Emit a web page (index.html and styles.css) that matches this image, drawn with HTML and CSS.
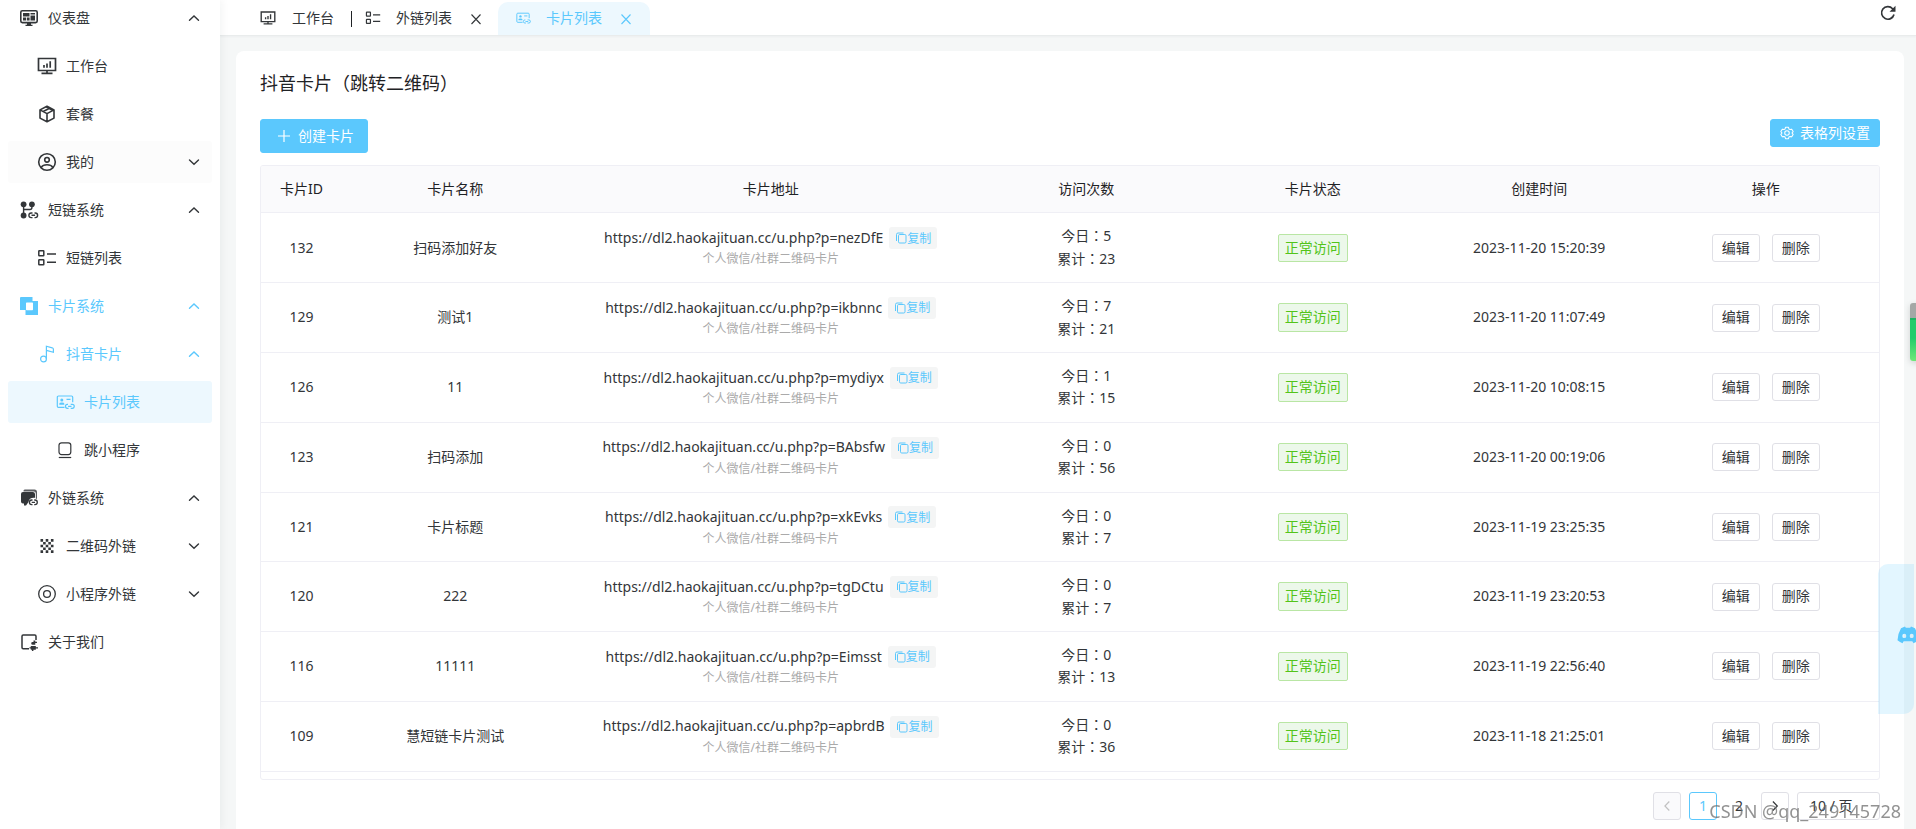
FILE: index.html
```html
<!DOCTYPE html>
<html lang="zh-CN">
<head>
<meta charset="utf-8">
<meta name="viewport" content="width=device-width, initial-scale=1">
<title>卡片列表</title>
<link rel="stylesheet" href="styles.css">
</head>
<body>
<svg class="sprite" aria-hidden="true">
  <symbol id="i-up" viewBox="0 0 16 16"><path d="M3.500 10.300 8 5.900l4.500 4.400" fill="none" stroke="currentColor" stroke-width="1.400" stroke-linecap="round"/></symbol>
  <symbol id="i-down" viewBox="0 0 16 16"><path d="M3.500 5.900 8 10.300l4.500-4.400" fill="none" stroke="currentColor" stroke-width="1.400" stroke-linecap="round"/></symbol>
  <symbol id="i-dash" viewBox="0 0 20 20"><rect x="1.800" y="2.800" width="16.400" height="11.800" rx="1.500" fill="none" stroke="currentColor" stroke-width="1.600"/><path d="M4 5h6.500v3.600H4zM11.500 5H16v1.600h-4.500zM11.500 7.400H16v5.200h-4.500zM4 9.500h3v3.100H4zM7.800 9.500h2.800v3.100H7.800zM8 14.500h4v2.200h1.500V18h-7v-1.300H8z" fill="currentColor"/></symbol>
  <symbol id="i-monitor" viewBox="0 0 20 20"><g fill="none" stroke="currentColor" stroke-width="1.700"><path d="M1.500 2.500h17v12h-17zM4.500 17.300h11M10 14.500v2.800M7 9v2.700M10 7.500v4.200M13.200 5.300v6.400"/></g></symbol>
  <symbol id="i-box" viewBox="0 0 20 20"><path d="M10 2.200 17 5.900v8.200l-7 3.700-7-3.700V5.900zM3 5.900l7 3.700 7-3.700M10 9.600v8.200M9 2.800 16 6.500M6.200 7.500 13 4" fill="none" stroke="currentColor" stroke-width="1.600" stroke-linejoin="round"/></symbol>
  <symbol id="i-user" viewBox="0 0 20 20"><g fill="none" stroke="currentColor" stroke-width="1.600"><circle cx="10" cy="10" r="8.300"/><circle cx="10" cy="7.800" r="2.300"/><path d="M4 15.600c1.300-2 3.500-2.800 6-2.800s4.700.8 6 2.800"/></g></symbol>
  <symbol id="i-flow" viewBox="0 0 20 20"><g fill="currentColor"><circle cx="4.600" cy="4.300" r="2.900"/><circle cx="12.900" cy="4.300" r="2.900"/><circle cx="4.600" cy="15.500" r="2.900"/></g><path d="M4.600 5v9M12.900 5v2.500q0 2-2 2H4.600M13.500 13h-1.300a2.300 2.300 0 0 0 0 4.600h1.300M15.500 13h.8a2.300 2.300 0 0 1 0 4.600h-.8M12.500 15.300h3.600" fill="none" stroke="currentColor" stroke-width="1.400"/></symbol>
  <symbol id="i-list" viewBox="0 0 20 20"><g fill="none" stroke="currentColor" stroke-width="1.500"><rect x="1.800" y="2.700" width="5" height="5" rx=".5"/><rect x="1.800" y="11.700" width="5" height="5" rx=".5"/><path d="M10 6h9M10 14.300h9"/></g></symbol>
  <symbol id="i-cards" viewBox="0 0 20 20"><path d="M2 1h11.500v4H19v14H6.500v-5H1V2q0-1 1-1zM7 7.200v6.400q0 .7.700.7h5.600q.7 0 .7-.7V7.200q0-.7-.7-.7H7.700q-.7 0-.7.700z" fill="currentColor" fill-rule="evenodd"/></symbol>
  <symbol id="i-note" viewBox="0 0 20 20"><g fill="none" stroke="currentColor" stroke-width="1.200"><circle cx="6.500" cy="15" r="2.900"/><path d="M9.400 15V2.200l5.800 1.600q1.200.4 1.200 1.500v3L9.400 6.300"/></g></symbol>
  <symbol id="i-idcard" viewBox="0 0 20 20"><path d="M9.500 15.400H3.500q-1.200 0-1.200-1.200V5.200Q2.300 4 3.500 4h13q1.200 0 1.200 1.200v5M11.500 7.400h4M13 12.400h-.6a1.900 1.900 0 0 0 0 3.900h1.200M15.700 12.400h1.600a1.900 1.900 0 0 1 0 3.900h-1.600M13.100 14.400h3.400" fill="none" stroke="currentColor" stroke-width="1.200"/><circle cx="6.800" cy="8" r="1.500" fill="currentColor"/><path d="M4.300 12.800v-1q0-1.300 2.500-1.300t2.500 1.300v1z" fill="currentColor"/></symbol>
  <symbol id="i-mini" viewBox="0 0 20 20"><g fill="none" stroke="currentColor" stroke-width="1.200"><rect x="4" y="2.800" width="11.800" height="11.800" rx="2.500"/><path d="M3.800 17.500h12.400"/></g></symbol>
  <symbol id="i-chat" viewBox="0 0 20 20"><path d="M4.500 2.500q.4-1 1.500-1h9.500q2.500 0 2.500 2.500v7l-1.200-.5V5.500q0-2-2-2H4.500z" fill="currentColor" opacity=".8"/><path d="M2 6q0-2 2-2h9.800Q16 4 16 6v3.800q-6-.5-6.500 4.200L7 17.500H5v-2H4q-2 0-2-2z" fill="currentColor"/><path d="M13.500 12h-.8a2.300 2.300 0 0 0 0 4.600h.8M15.200 12h.8a2.300 2.300 0 0 1 0 4.600h-.8M12.700 14.300h3.300" fill="none" stroke="currentColor" stroke-width="1.300"/></symbol>
  <symbol id="i-qr" viewBox="0 0 20 20"><path d="M3.500 4.400h13M3.500 10h13M3.500 15.600h13" fill="none" stroke="currentColor" stroke-width="2.600" stroke-dasharray="2.600"/><path d="M6.100 7.200h8.400M6.100 12.800h8.400" fill="none" stroke="currentColor" stroke-width="2.600" stroke-dasharray="2.600"/></symbol>
  <symbol id="i-target" viewBox="0 0 20 20"><g fill="none" stroke="currentColor" stroke-width="1.300"><circle cx="10" cy="10" r="8.300"/><circle cx="10" cy="10" r="3.400"/></g></symbol>
  <symbol id="i-about" viewBox="0 0 20 20"><path d="M10 16.700H4.200q-1.200 0-1.200-1.200V4.200Q3 3 4.200 3h11.600Q17 3 17 4.200V8" fill="none" stroke="currentColor" stroke-width="1.500"/><path d="M14.500 8.500h1.800v1.300H18V11h-1.700v1.800h-2.500q-1.600 0-1.600-1.500 0-1.200 1.500-1.200h.8zM10.500 15.200h1.300V14h5v1.200H19v1.200h-2.200v1.300h-2.400V19h-1.500v-1.300h-1.100v-1.300h-1.300z" fill="currentColor"/></symbol>
  <symbol id="i-close" viewBox="0 0 14 14"><path d="M2.500 2.500l9 9.500M11.500 2.500l-9 9.500" fill="none" stroke="currentColor" stroke-width="1.100"/></symbol>
  <symbol id="i-refresh" viewBox="0 0 16 16"><path d="M14 9.500A6.300 6.300 0 1 1 12.600 3.700L14 5" fill="none" stroke="currentColor" stroke-width="1.700"/><path d="M15.500.8v6h-6z" fill="currentColor"/></symbol>
  <symbol id="i-plus" viewBox="0 0 14 14"><path d="M7 1v12M1 7h12" fill="none" stroke="currentColor" stroke-width="1.200"/></symbol>
  <symbol id="i-gear" viewBox="0 0 16 16"><g fill="none" stroke="currentColor" stroke-width="1.200" stroke-linejoin="round"><path d="M6.300 1.500h3.400l.5 1.900 1.300.7 1.900-.5 1.600 2.800L13.700 8l1.300 1.600-1.600 2.800-1.900-.5-1.300.7-.5 1.900H6.300l-.5-1.900-1.300-.7-1.900.5L1 9.600 2.300 8 1 6.400l1.600-2.800 1.900.5 1.300-.7z"/><circle cx="8" cy="8" r="2.600"/></g></symbol>
  <symbol id="i-copy" viewBox="0 0 12 12"><g fill="none" stroke="currentColor"><rect x="3.500" y="2.500" width="7.500" height="8.500" rx="1.200"/><path d="M1.500 9V2.500Q1.500 1 3 1h5.500"/></g></symbol>
  <symbol id="i-bot" viewBox="0 0 22 18"><path d="M4 2.200 8 .6l.8 1.200h4.400L14 .6l4 1.600q3.500 6 3.500 12-2.500 2.200-5 3l-1.200-2H6.700l-1.200 2q-2.500-.8-5-3 0-6 3.500-12zM7.300 7.700a2 2.200 0 1 0 0 4.400 2 2.200 0 0 0 0-4.400zM14.700 7.700a2 2.200 0 1 0 0 4.400 2 2.200 0 0 0 0-4.400z" fill="currentColor" fill-rule="evenodd"/></symbol>
</svg>

<div class="app">
  <aside class="sidebar">
    <nav class="menu" aria-label="主菜单">
      <a class="item" href="#"><svg class="icon"><use href="#i-dash"/></svg><span>仪表盘</span><svg class="arrow"><use href="#i-up"/></svg></a>
      <a class="item level-2" href="#"><svg class="icon"><use href="#i-monitor"/></svg><span>工作台</span></a>
      <a class="item level-2" href="#"><svg class="icon"><use href="#i-box"/></svg><span>套餐</span></a>
      <a class="item level-2 hovered" href="#"><svg class="icon"><use href="#i-user"/></svg><span>我的</span><svg class="arrow"><use href="#i-down"/></svg></a>
      <a class="item" href="#"><svg class="icon"><use href="#i-flow"/></svg><span>短链系统</span><svg class="arrow"><use href="#i-up"/></svg></a>
      <a class="item level-2" href="#"><svg class="icon"><use href="#i-list"/></svg><span>短链列表</span></a>
      <a class="item active" href="#"><svg class="icon"><use href="#i-cards"/></svg><span>卡片系统</span><svg class="arrow"><use href="#i-up"/></svg></a>
      <a class="item level-2 active" href="#"><svg class="icon"><use href="#i-note"/></svg><span>抖音卡片</span><svg class="arrow"><use href="#i-up"/></svg></a>
      <a class="item level-3 active selected" href="#" aria-current="page"><svg class="icon"><use href="#i-idcard"/></svg><span>卡片列表</span></a>
      <a class="item level-3" href="#"><svg class="icon"><use href="#i-mini"/></svg><span>跳小程序</span></a>
      <a class="item" href="#"><svg class="icon"><use href="#i-chat"/></svg><span>外链系统</span><svg class="arrow"><use href="#i-up"/></svg></a>
      <a class="item level-2" href="#"><svg class="icon"><use href="#i-qr"/></svg><span>二维码外链</span><svg class="arrow"><use href="#i-down"/></svg></a>
      <a class="item level-2" href="#"><svg class="icon"><use href="#i-target"/></svg><span>小程序外链</span><svg class="arrow"><use href="#i-down"/></svg></a>
      <a class="item" href="#"><svg class="icon"><use href="#i-about"/></svg><span>关于我们</span></a>
    </nav>
  </aside>

  <div class="main">
    <header class="tabbar">
      <div class="tab home"><a href="#"><svg class="tab-icon"><use href="#i-monitor"/></svg>工作台</a></div>
      <div class="tab first"><a href="#"><svg class="tab-icon"><use href="#i-list"/></svg>外链列表</a><button class="close" aria-label="关闭外链列表"><svg><use href="#i-close"/></svg></button></div>
      <div class="tab current"><a href="#"><svg class="tab-icon"><use href="#i-idcard"/></svg>卡片列表</a><button class="close" aria-label="关闭卡片列表"><svg><use href="#i-close"/></svg></button></div>
      <button class="refresh" aria-label="刷新"><svg><use href="#i-refresh"/></svg></button>
    </header>

    <main class="card">
      <h1 class="title">抖音卡片<span class="punct" lang="zh-TW">（</span>跳转二维码<span class="punct" lang="zh-TW">）</span></h1>
      <div class="toolbar">
        <button class="btn primary large"><svg><use href="#i-plus"/></svg>创建卡片</button>
        <button class="btn primary"><svg><use href="#i-gear"/></svg>表格列设置</button>
      </div>
      <div class="table-wrap">
        <table class="table">
          <colgroup><col><col class="col-normal"><col class="col-url"><col class="col-normal"><col class="col-normal"><col class="col-normal"><col class="col-normal"></colgroup>
          <thead><tr><th>卡片ID</th><th>卡片名称</th><th>卡片地址</th><th>访问次数</th><th>卡片状态</th><th>创建时间</th><th>操作</th></tr></thead>
          <tbody>
            <tr><td>132</td><td>扫码添加好友</td><td><div class="url">https://dl2.haokajituan.cc/u.php?p=nezDfE<button class="copy"><svg><use href="#i-copy"/></svg>复制</button></div><div class="note">个人微信/社群二维码卡片</div></td><td><div>今日<span class="punct" lang="zh-TW">：</span>5</div><div>累计<span class="punct" lang="zh-TW">：</span>23</div></td><td><span class="status">正常访问</span></td><td>2023-11-20 15:20:39</td><td><div class="actions"><button class="btn">编辑</button><button class="btn">删除</button></div></td></tr>
            <tr><td>129</td><td>测试1</td><td><div class="url">https://dl2.haokajituan.cc/u.php?p=ikbnnc<button class="copy"><svg><use href="#i-copy"/></svg>复制</button></div><div class="note">个人微信/社群二维码卡片</div></td><td><div>今日<span class="punct" lang="zh-TW">：</span>7</div><div>累计<span class="punct" lang="zh-TW">：</span>21</div></td><td><span class="status">正常访问</span></td><td>2023-11-20 11:07:49</td><td><div class="actions"><button class="btn">编辑</button><button class="btn">删除</button></div></td></tr>
            <tr><td>126</td><td>11</td><td><div class="url">https://dl2.haokajituan.cc/u.php?p=mydiyx<button class="copy"><svg><use href="#i-copy"/></svg>复制</button></div><div class="note">个人微信/社群二维码卡片</div></td><td><div>今日<span class="punct" lang="zh-TW">：</span>1</div><div>累计<span class="punct" lang="zh-TW">：</span>15</div></td><td><span class="status">正常访问</span></td><td>2023-11-20 10:08:15</td><td><div class="actions"><button class="btn">编辑</button><button class="btn">删除</button></div></td></tr>
            <tr><td>123</td><td>扫码添加</td><td><div class="url">https://dl2.haokajituan.cc/u.php?p=BAbsfw<button class="copy"><svg><use href="#i-copy"/></svg>复制</button></div><div class="note">个人微信/社群二维码卡片</div></td><td><div>今日<span class="punct" lang="zh-TW">：</span>0</div><div>累计<span class="punct" lang="zh-TW">：</span>56</div></td><td><span class="status">正常访问</span></td><td>2023-11-20 00:19:06</td><td><div class="actions"><button class="btn">编辑</button><button class="btn">删除</button></div></td></tr>
            <tr><td>121</td><td>卡片标题</td><td><div class="url">https://dl2.haokajituan.cc/u.php?p=xkEvks<button class="copy"><svg><use href="#i-copy"/></svg>复制</button></div><div class="note">个人微信/社群二维码卡片</div></td><td><div>今日<span class="punct" lang="zh-TW">：</span>0</div><div>累计<span class="punct" lang="zh-TW">：</span>7</div></td><td><span class="status">正常访问</span></td><td>2023-11-19 23:25:35</td><td><div class="actions"><button class="btn">编辑</button><button class="btn">删除</button></div></td></tr>
            <tr><td>120</td><td>222</td><td><div class="url">https://dl2.haokajituan.cc/u.php?p=tgDCtu<button class="copy"><svg><use href="#i-copy"/></svg>复制</button></div><div class="note">个人微信/社群二维码卡片</div></td><td><div>今日<span class="punct" lang="zh-TW">：</span>0</div><div>累计<span class="punct" lang="zh-TW">：</span>7</div></td><td><span class="status">正常访问</span></td><td>2023-11-19 23:20:53</td><td><div class="actions"><button class="btn">编辑</button><button class="btn">删除</button></div></td></tr>
            <tr><td>116</td><td>11111</td><td><div class="url">https://dl2.haokajituan.cc/u.php?p=Eimsst<button class="copy"><svg><use href="#i-copy"/></svg>复制</button></div><div class="note">个人微信/社群二维码卡片</div></td><td><div>今日<span class="punct" lang="zh-TW">：</span>0</div><div>累计<span class="punct" lang="zh-TW">：</span>13</div></td><td><span class="status">正常访问</span></td><td>2023-11-19 22:56:40</td><td><div class="actions"><button class="btn">编辑</button><button class="btn">删除</button></div></td></tr>
            <tr><td>109</td><td>慧短链卡片测试</td><td><div class="url">https://dl2.haokajituan.cc/u.php?p=apbrdB<button class="copy"><svg><use href="#i-copy"/></svg>复制</button></div><div class="note">个人微信/社群二维码卡片</div></td><td><div>今日<span class="punct" lang="zh-TW">：</span>0</div><div>累计<span class="punct" lang="zh-TW">：</span>36</div></td><td><span class="status">正常访问</span></td><td>2023-11-18 21:25:01</td><td><div class="actions"><button class="btn">编辑</button><button class="btn">删除</button></div></td></tr>
          </tbody>
        </table>
      </div>
      <nav class="pager" aria-label="分页">
        <button class="page disabled" disabled aria-label="上一页"><svg><path d="M10.300 3.500 5.900 8l4.400 4.500"/></svg></button>
        <button class="page on" aria-current="page">1</button>
        <button class="page plain">2</button>
        <button class="page" aria-label="下一页"><svg><path d="M5.900 3.500 10.300 8l-4.400 4.500"/></svg></button>
        <select class="page-size" aria-label="每页条数"><option>10 / 页</option></select>
      </nav>
    </main>
  </div>
</div>

<div class="meter"></div>
<button class="helper" aria-label="助手"><svg><use href="#i-bot"/></svg></button>
<div class="watermark">CSDN @qq_249145728</div>
</body>
</html>
```
FILE: styles.css
```css
:root {
  --primary: #5bc8fd;
  --text: #333639;
  --line: #efeff5;
  --control: #e0e0e6;
  --font: "Noto Sans", "Noto Sans CJK SC", sans-serif;
}

* { box-sizing: border-box; }

body {
  margin: 0;
  overflow: hidden;
  font: 14px/1.6 var(--font);
  color: var(--text);
  background: #f5f7f7;
}

button, select { font: inherit; color: inherit; margin: 0; }
a { color: inherit; text-decoration: none; }
svg { flex: none; fill: none; }
.sprite { position: absolute; width: 0; height: 0; }

.app { display: flex; height: 100vh; }

/* Sidebar */
.sidebar {
  flex: none;
  width: 220px;
  overflow: hidden;
  background: #fff;
  box-shadow: 2px 0 8px rgba(29, 35, 41, .05);
  z-index: 2;
}
.menu { display: grid; gap: 6px; padding: 0 8px; margin-top: -3px; }
.item {
  display: flex;
  align-items: center;
  gap: 9px;
  height: 42px;
  padding: 0 10px 0 11px;
  border-radius: 3px;
}
.level-2 { padding-left: 29px; }
.level-3 { padding-left: 47px; }
.hovered { background: #fcfcfc; }
.active { color: var(--primary); }
.selected { background: #edf8fe; }
.icon { width: 20px; height: 20px; }
.arrow { width: 16px; height: 16px; margin-left: auto; }

/* Tab bar */
.main { flex: 1; min-width: 0; display: flex; flex-direction: column; }
.tabbar {
  flex: none;
  display: flex;
  align-items: flex-end;
  height: 36px;
  padding: 0 20px 0 40px;
  background: #fff;
  border-bottom: 1px solid #e9ecec;
  box-shadow: 0 1px 2px rgba(0, 21, 41, .04);
}
.tab { display: flex; align-items: center; gap: 17px; height: 33px; padding: 0 17px; }
.tab a { display: flex; align-items: center; gap: 15px; }
.tab-icon { width: 16px; height: 16px; }
.home { padding: 0 17px 0 0; }
.home a { gap: 16px; }
.first { position: relative; padding: 0 15px 0 14px; }
.first::before { content: ""; position: absolute; left: 0; top: 9px; width: 1px; height: 16px; background: #1f2225; }
.current { color: var(--primary); background: #edf8fe; border-radius: 10px 10px 0 0; }
.close { display: flex; padding: 0; border: 0; background: none; }
.close svg { width: 14px; height: 14px; }
.refresh { align-self: flex-start; display: flex; margin-left: auto; padding: 5px 0 0; border: 0; background: none; }
.refresh svg { width: 16px; height: 16px; }

/* Content card */
.card {
  flex: 1;
  min-height: 0;
  display: flex;
  flex-direction: column;
  margin: 15px 12px 0 16px;
  padding: 17px 24px 9px;
  background: #fff;
  border-radius: 8px 8px 0 0;
}
.title { margin: 0 0 21px; font-size: 18px; line-height: 30px; font-weight: 400; color: #1f2225; }
.toolbar { display: flex; justify-content: space-between; align-items: flex-start; margin-bottom: 12px; }
.btn {
  display: flex;
  align-items: center;
  justify-content: center;
  height: 28px;
  padding: 0 9px;
  border: 1px solid var(--control);
  border-radius: 3px;
  background: #fff;
}
.primary { gap: 6px; color: #fff; border-color: var(--primary); background: var(--primary); }
.primary svg { width: 14px; height: 14px; }
.large { gap: 7px; height: 34px; padding: 0 13px 0 16px; }

/* Table */
.table-wrap { flex: 1; min-height: 0; overflow: hidden; border: 1px solid var(--line); border-radius: 3px; }
.table { width: 100%; table-layout: fixed; border-collapse: separate; border-spacing: 0; text-align: center; }
.col-normal { width: 14%; }
.col-url { width: 25%; }
.table th, .table td { padding: 12px; border-bottom: 1px solid var(--line); }
.table th { font-weight: 400; color: #1f2225; background: #fafafc; }
.table td { padding: 12px 0; }
.url { display: flex; align-items: center; justify-content: center; gap: 6px; white-space: nowrap; }
.copy {
  display: flex;
  align-items: center;
  height: 22px;
  padding: 0 6px;
  border: 0;
  border-radius: 3px;
  font-size: 12px;
  color: var(--primary);
  background: #f4f5f5;
}
.copy svg { width: 12px; height: 12px; }
.note { font-size: 12px; color: #aaa; }
.punct { font-family: "Noto Sans CJK TC", sans-serif; line-height: 1; }
.status {
  display: inline-block;
  padding: 2px 6px;
  border: 1px solid #b9e6a4;
  border-radius: 2px;
  color: #52c41a;
  background: #ecf8ea;
}
.actions { display: flex; justify-content: center; gap: 12px; }

/* Pagination */
.pager { display: flex; justify-content: flex-end; gap: 8px; margin-top: 12px; }
.page {
  display: flex;
  align-items: center;
  justify-content: center;
  width: 28px;
  height: 28px;
  padding: 0;
  border: 1px solid var(--control);
  border-radius: 3px;
  background: #fff;
}
.page svg { width: 16px; height: 16px; stroke: currentColor; stroke-width: 1.2; }
.disabled { color: #c2c2c2; background: #fafafc; }
.on { color: var(--primary); border-color: var(--primary); }
.plain { border-color: transparent; }
.page-size {
  appearance: none;
  width: 83px;
  height: 28px;
  padding: 0 12px;
  border: 1px solid var(--control);
  border-radius: 3px;
  background: #fff;
}

/* Floating widgets */
.meter {
  position: fixed;
  right: -10px;
  top: 303px;
  width: 16px;
  height: 58px;
  border-radius: 3px;
  background: linear-gradient(#a4a8a6 0 15px, #1db562 15px 17px, #22cc6b 17px 35px, #6fe878);
  box-shadow: 0 2px 6px rgba(0, 0, 0, .15);
  z-index: 3;
}
.helper {
  position: fixed;
  right: 2px;
  top: 564px;
  display: flex;
  align-items: center;
  width: 36px;
  height: 150px;
  padding: 0 0 8px 19px;
  border: 0;
  border-radius: 10px 0;
  color: var(--primary);
  background: rgba(91, 200, 253, .17);
  z-index: 3;
}
.helper svg { width: 22px; height: 18px; }
.watermark {
  position: fixed;
  right: 15px;
  bottom: 4px;
  font-size: 18px;
  line-height: 28px;
  color: rgba(110, 110, 110, .75);
  z-index: 4;
}
```
